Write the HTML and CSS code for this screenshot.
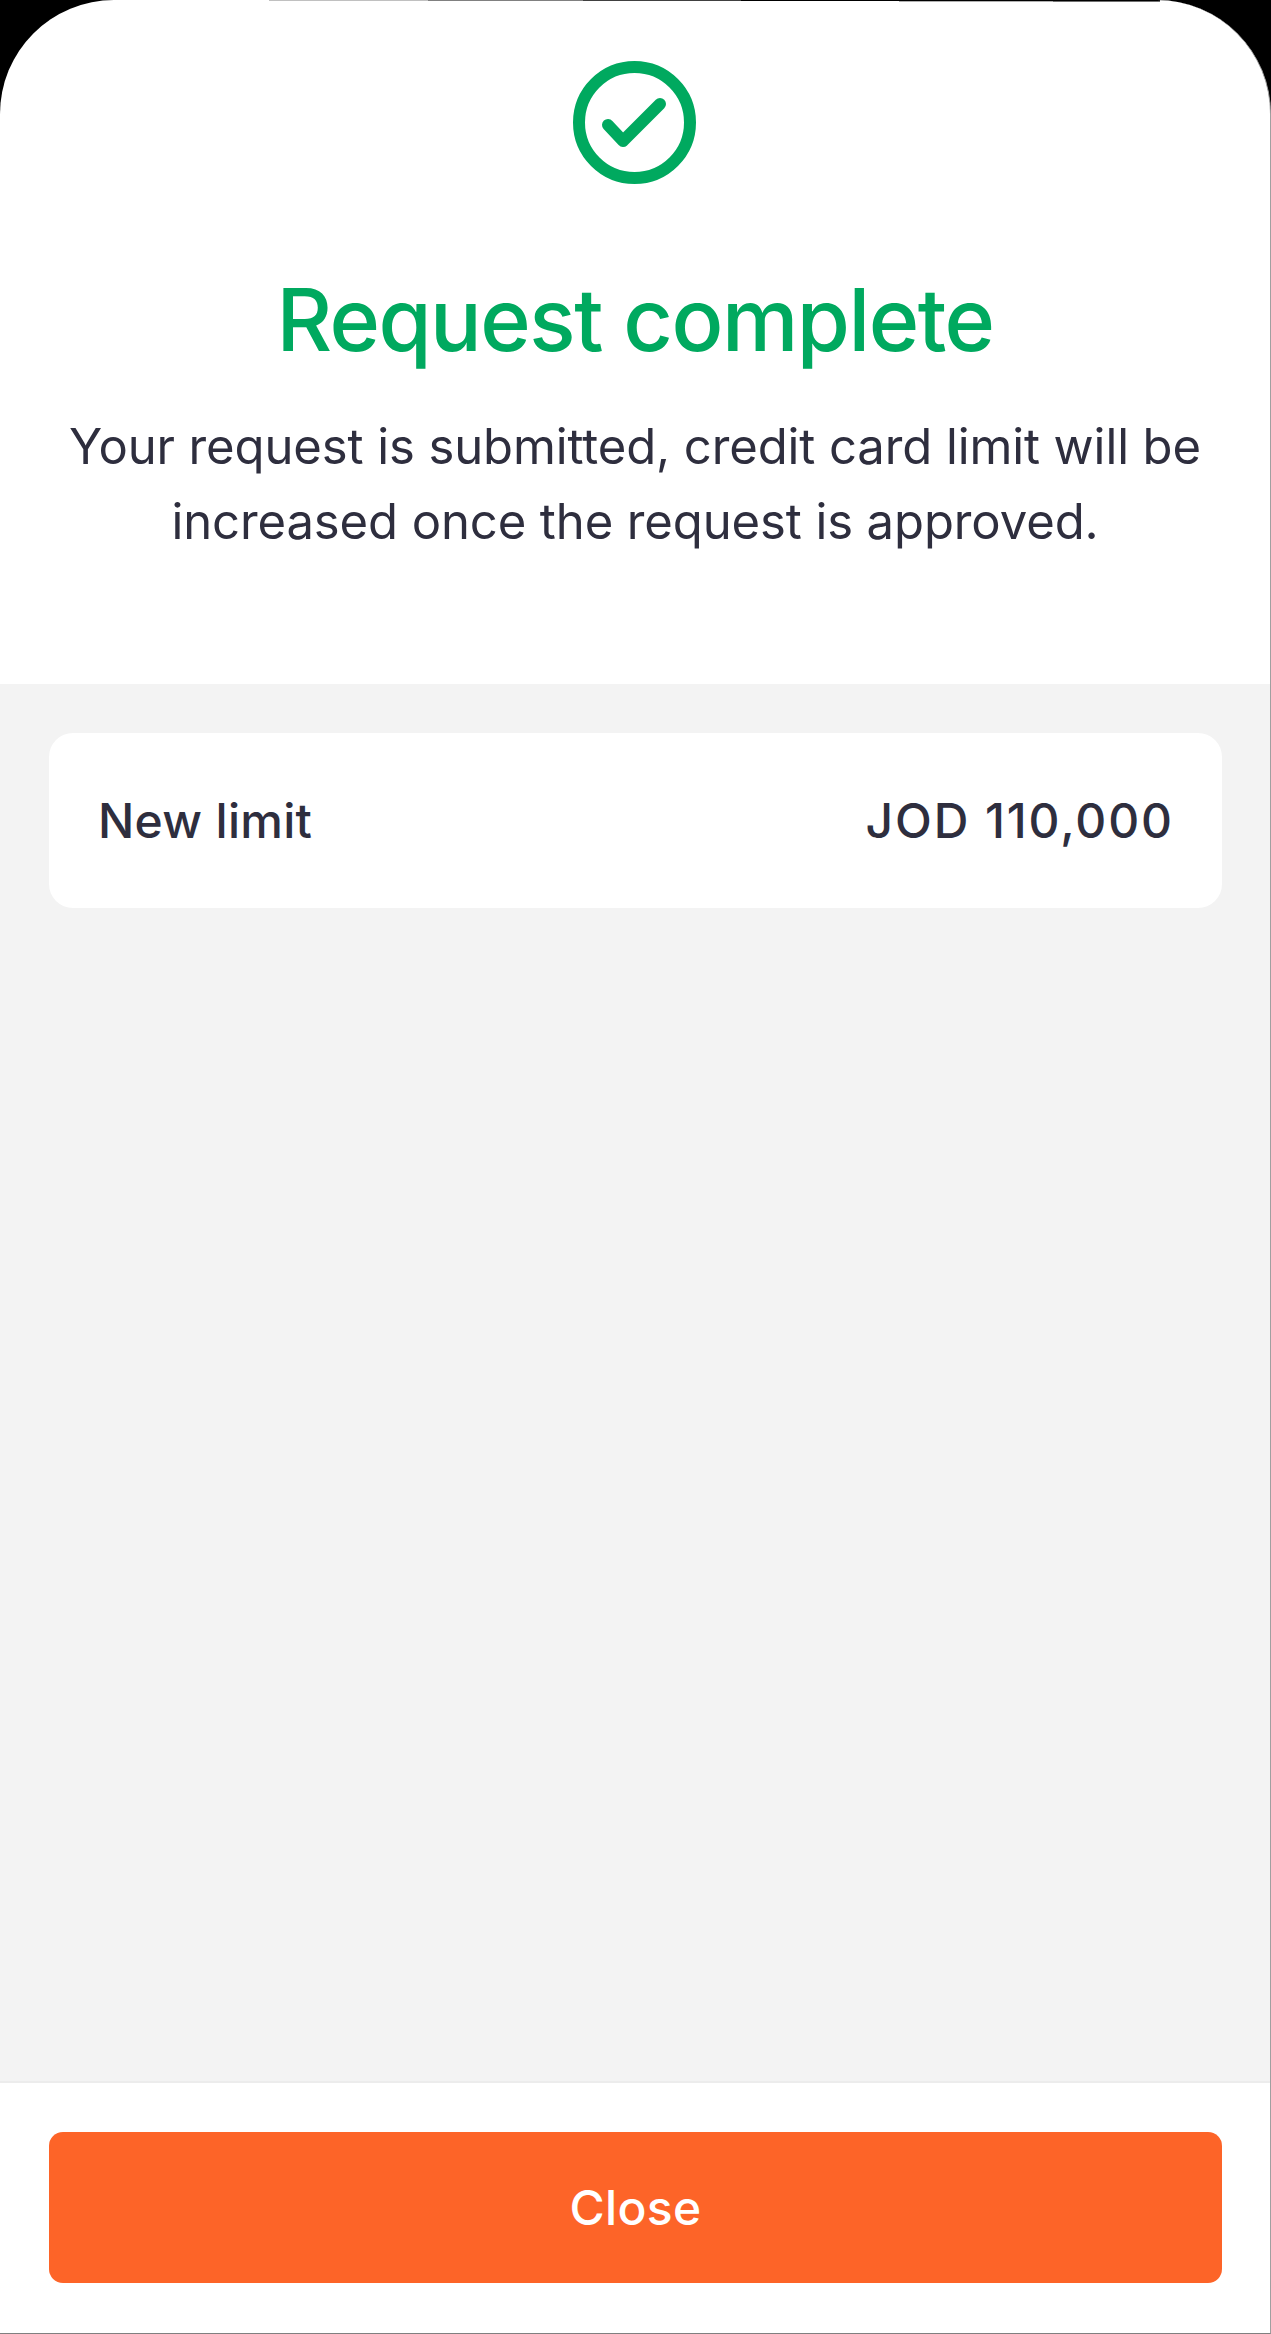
FILE: index.html
```html
<!DOCTYPE html>
<html lang="en">
<head>
  <meta charset="UTF-8">
  <meta name="viewport" content="width=device-width, initial-scale=1.0">
  <title>Request complete</title>
  <link rel="stylesheet" href="styles.css">
</head>
<body>
  <div class="screen">
    <div class="top-strip"></div>
    <div class="top-strip-lower"></div>
    <div class="summary">
      <svg class="check-icon" viewBox="0 0 124 123" width="124" height="123">
        <circle cx="61.5" cy="61.5" r="55.5" fill="none" stroke="#00a95f" stroke-width="12"/>
        <path d="M35 64 L50 80 L87 43" fill="none" stroke="#00a95f" stroke-width="12" stroke-linecap="round" stroke-linejoin="round"/>
      </svg>
      <h1 class="title">Request complete</h1>
      <p class="message">Your request is submitted, credit card limit will be increased once the request is approved.</p>
    </div>
    <div class="details">
      <div class="limit-card">
        <span class="limit-label">New limit</span>
        <span class="limit-value">JOD 110,000</span>
      </div>
    </div>
    <div class="footer">
      <button class="close-button">Close</button>
    </div>
  </div>
</body>
</html>
```

FILE: styles.css
```css
html, body {
  height: 100%;
}
body {
  margin: 0;
  background-color: #000000;
  font-family: "Inter", Arial, sans-serif;
  color: #2e2e3e;
}
.screen {
  position: relative;
  display: flex;
  flex-direction: column;
  height: 2334px;
  box-sizing: border-box;
  background-color: #ffffff;
  border-top-left-radius: 114px;
  border-top-right-radius: 114px;
  border-right: 1px solid #a0a0a0;
  border-bottom: 1px solid #808080;
  overflow: hidden;
}
.top-strip {
  position: absolute;
  top: 0;
  left: 269px;
  width: 891px;
  height: 1px;
  background: linear-gradient(90deg, #c0c0c0 0 159px, #808080 159px 314px, #404040 314px 472px, #000000 472px);
}
.top-strip-lower {
  position: absolute;
  top: 1px;
  left: 899px;
  width: 261px;
  height: 1px;
  background: linear-gradient(90deg, #b0b0b0 0 154px, #707070 154px);
}
.summary {
  height: 684px;
  flex-shrink: 0;
  text-align: center;
  padding-top: 61px;
  box-sizing: border-box;
}
.check-icon {
  display: block;
  margin: 0 auto;
}
.title {
  margin: 86px 0 0;
  font-size: 86px;
  line-height: 100px;
  font-weight: 500;
  letter-spacing: -1.5px;
  color: #00a95f;
}
.message {
  width: 1180px;
  margin: 39px auto 0;
  font-size: 49px;
  line-height: 75px;
  letter-spacing: -0.1px;
}
.details {
  flex: 1;
  background-color: #f3f3f3;
  padding: 49px 48px 49px 49px;
}
.limit-card {
  display: flex;
  justify-content: space-between;
  align-items: center;
  height: 175px;
  padding: 0 50px;
  background-color: #ffffff;
  border-radius: 24px;
  font-size: 48px;
  font-weight: 500;
  letter-spacing: 0.3px;
}
.limit-label {
  margin-left: -1px;
}
.limit-value {
  margin-right: -2px;
  letter-spacing: 1.9px;
}
.footer {
  height: 252px;
  flex-shrink: 0;
  box-sizing: border-box;
  border-top: 2px solid #ececec;
  padding: 49px 48px 0 49px;
}
.close-button {
  display: block;
  width: 100%;
  height: 151px;
  border: none;
  border-radius: 14px;
  background-color: #fd6428;
  color: #ffffff;
  font-family: "Inter", Arial, sans-serif;
  font-size: 48px;
  font-weight: 500;
  letter-spacing: 0.3px;
}
```
